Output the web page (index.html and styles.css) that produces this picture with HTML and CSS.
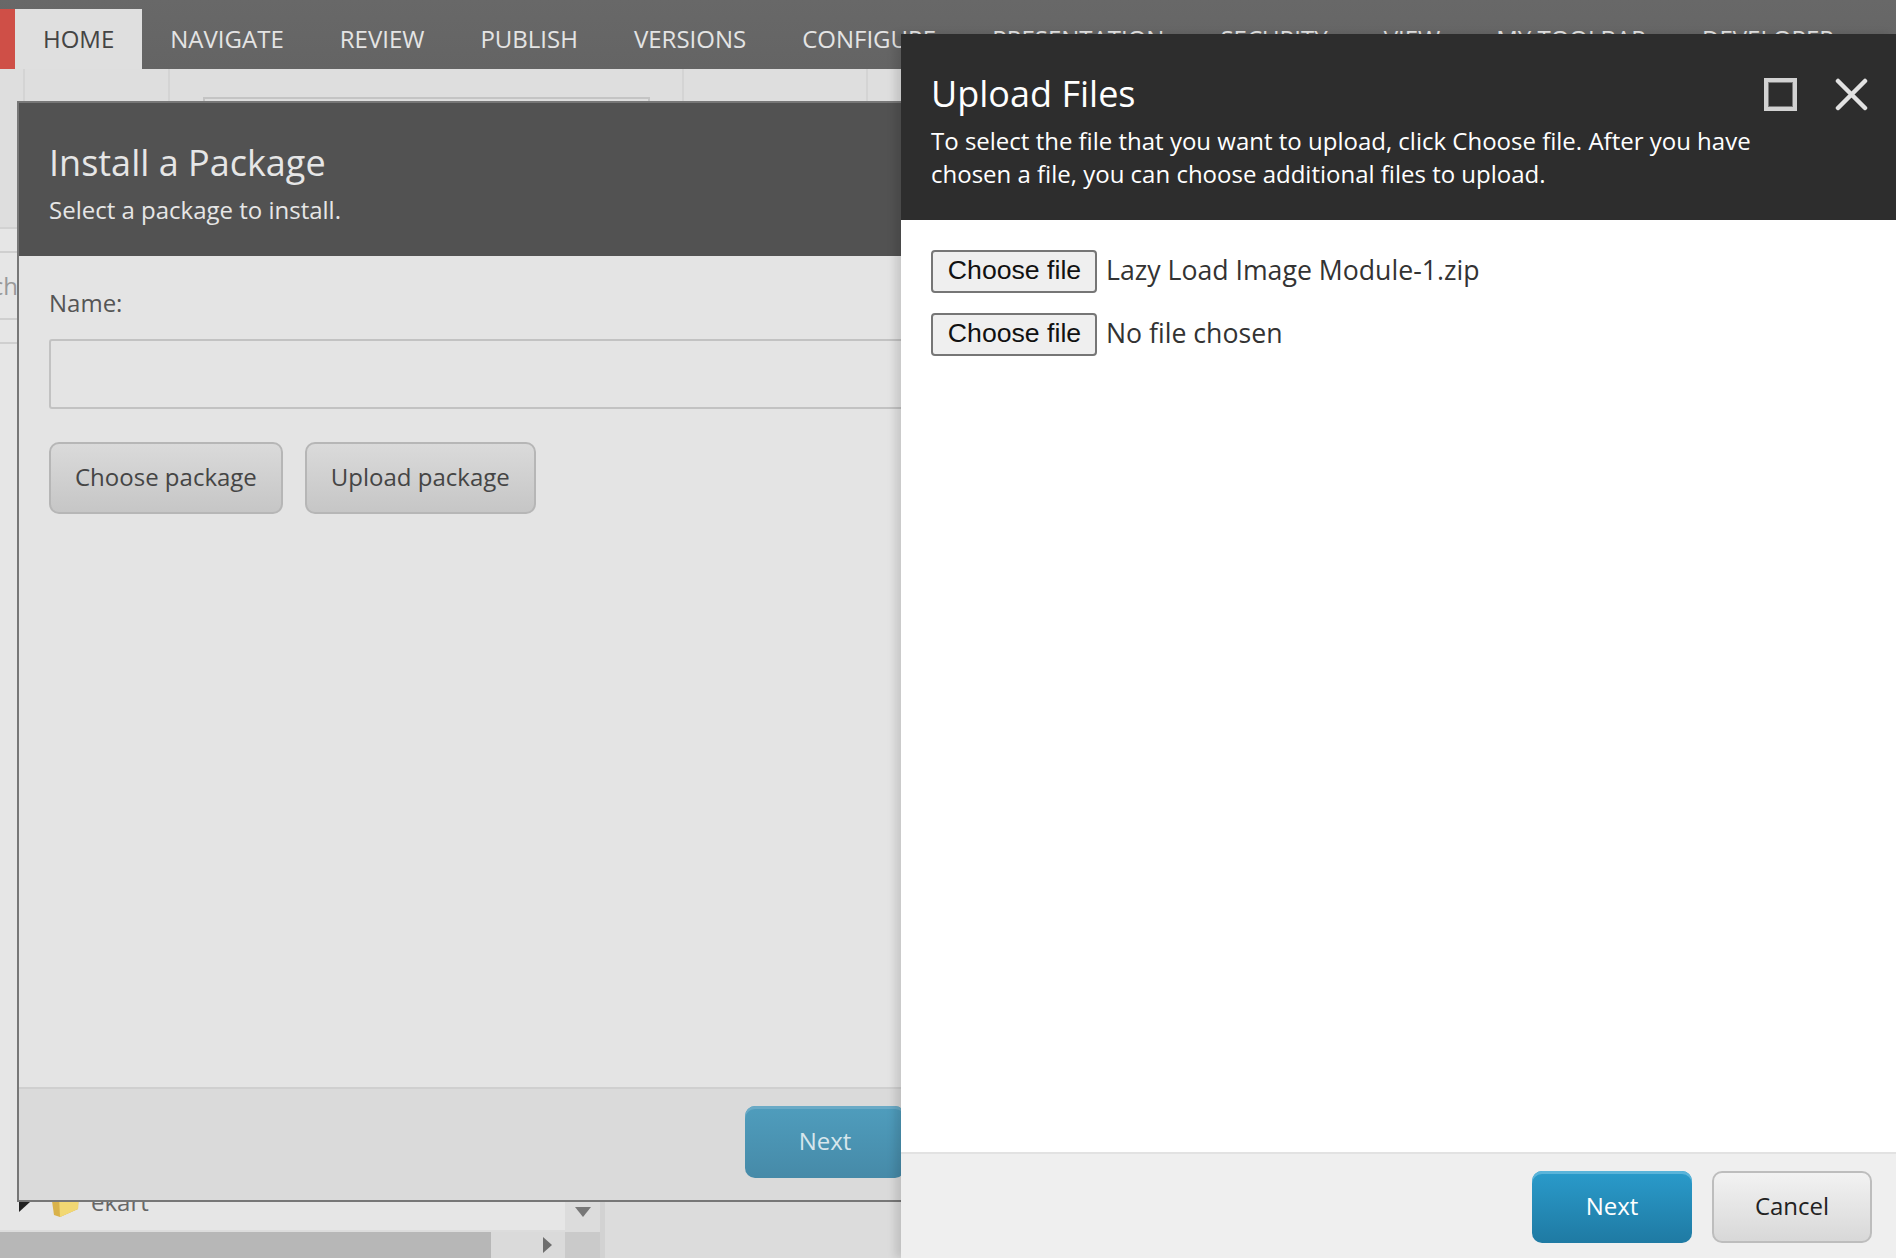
FILE: index.html
```html
<!DOCTYPE html>
<html lang="en">
<head>
    <meta charset="UTF-8">
    <title>Upload Files</title>
    <link rel="stylesheet" href="styles.css">
</head>
<body>
    <div class="app">
        <header class="topbar">
            <div class="logo"></div>
            <nav class="tabs">
                <a class="tab active">Home</a>
                <a class="tab">Navigate</a>
                <a class="tab">Review</a>
                <a class="tab">Publish</a>
                <a class="tab">Versions</a>
                <a class="tab">Configure</a>
                <a class="tab">Presentation</a>
                <a class="tab">Security</a>
                <a class="tab">View</a>
                <a class="tab">My Toolbar</a>
                <a class="tab">Developer</a>
            </nav>
        </header>
        <div class="ribbon">
            <div class="ribbon-group group-a"></div>
            <div class="ribbon-group group-b"></div>
            <div class="ribbon-group group-c"><div class="ribbon-box"></div></div>
            <div class="ribbon-group group-d"></div>
        </div>
        <div class="workspace">
            <aside class="tree-pane">
                <div class="pane-row row-thin"></div>
                <div class="pane-row row-search"><span>Search</span></div>
                <div class="pane-row row-thin"></div>
                <div class="tree">
                    <div class="tree-row">
                        <span class="tree-toggle"></span>
                        <svg class="folder" width="30" height="32" viewBox="0 0 30 32">
                            <path d="M1 8 L10 5 L29 3 L28 23 L10 31 L4 29 Z" fill="#d9b24a"/>
                            <path d="M9 10 L29 3 L28 23 L10 31 Z" fill="#f2d873"/>
                        </svg>
                        <span class="tree-label">ekart</span>
                    </div>
                    <div class="v-scroll"><span class="arrow-down"></span></div>
                </div>
                <div class="h-scroll">
                    <div class="h-thumb"></div>
                    <span class="arrow-right"></span>
                    <div class="scroll-corner"></div>
                </div>
            </aside>
            <div class="splitter"></div>
            <main class="editor"></main>
        </div>
    </div>

    <section class="dialog install">
        <div class="install-head">
            <h2>Install a Package</h2>
            <p>Select a package to install.</p>
        </div>
        <div class="install-body">
            <label class="name-label">Name:</label>
            <input class="name-input" type="text">
            <div class="install-actions">
                <button class="btn btn-gray">Choose package</button>
                <button class="btn btn-gray">Upload package</button>
            </div>
        </div>
        <div class="install-foot">
            <button class="btn btn-blue btn-faded">Next</button>
        </div>
    </section>

    <section class="dialog upload">
        <div class="upload-head">
            <div class="upload-title">
                <h2>Upload Files</h2>
                <div class="window-icons">
                    <svg width="33" height="33" viewBox="0 0 33 33">
                        <rect x="2" y="2" width="29" height="29" fill="none" stroke="#d2d2d2" stroke-width="4"/>
                        <rect x="4.5" y="4.5" width="24" height="24" fill="none" stroke="#7c7c7c" stroke-width="1"/>
                    </svg>
                    <svg width="33" height="33" viewBox="0 0 33 33">
                        <path d="M3 3 L30 30 M30 3 L3 30" fill="none" stroke="#e2e2e2" stroke-width="4.5" stroke-linecap="round"/>
                    </svg>
                </div>
            </div>
            <p>To select the file that you want to upload, click Choose file. After you have chosen a file, you can choose additional files to upload.</p>
        </div>
        <div class="upload-body">
            <div class="file-row">
                <button class="file-btn">Choose file</button>
                <span class="file-name">Lazy Load Image Module-1.zip</span>
            </div>
            <div class="file-row">
                <button class="file-btn">Choose file</button>
                <span class="file-name">No file chosen</span>
            </div>
        </div>
        <div class="upload-foot">
            <button class="btn btn-blue">Next</button>
            <button class="btn btn-light">Cancel</button>
        </div>
    </section>
</body>
</html>
```

FILE: styles.css
```css
*{
    box-sizing: border-box;
}
html, body{
    margin: 0;
    height: 100%;
    overflow: hidden;
}
body{
    font-family: "Open Sans", sans-serif;
    position: relative;
    background-color: #dedede;
}
h2, p{
    margin: 0;
    font-weight: 400;
}

/* page behind the dialogs */
.app{
    height: 1258px;
    display: flex;
    flex-direction: column;
}
.topbar{
    height: 69px;
    padding-top: 9px;
    display: flex;
    background: linear-gradient(#686868, #646464);
}
.logo{
    width: 15px;
    background-color: #cf4f47;
}
.tabs{
    display: flex;
}
.tab{
    padding: 13px 28px 0;
    font-size: 24px;
    line-height: 33px;
    text-transform: uppercase;
    color: #e4e4e4;
    white-space: nowrap;
}
.tab.active{
    background-color: #dfdfdf;
    color: #444;
}
.ribbon{
    height: 160px;
    flex-shrink: 0;
    display: flex;
    border-bottom: 2px solid #d2d2d2;
}
.ribbon-group{
    border-right: 2px solid #d4d4d4;
}
.group-a{ width: 25px; }
.group-b{ width: 145px; }
.group-c{
    width: 514px;
    padding: 28px 0 0 33px;
}
.group-d{ width: 184px; }
.ribbon-box{
    width: 447px;
    height: 40px;
    border: 2px solid #c4c4c4;
}
.workspace{
    flex: 1;
    display: flex;
    min-height: 0;
}
.tree-pane{
    width: 600px;
    display: flex;
    flex-direction: column;
    flex-shrink: 0;
}
.pane-row{
    background-color: #e6e6e6;
    border-bottom: 2px solid #cfcfcf;
}
.row-thin{
    height: 24px;
}
.row-search{
    height: 67px;
    width: 18px;
    overflow: hidden;
    display: flex;
    justify-content: flex-end;
    align-items: center;
    font-size: 24px;
    color: #999;
}
.tree{
    flex: 1;
    display: flex;
    align-items: flex-end;
    background-color: #e6e6e6;
    border-bottom: 2px solid #dcdcdc;
}
.tree-row{
    flex: 1;
    height: 54px;
    padding: 0 0 3px 19px;
    display: flex;
    align-items: center;
    color: #666;
    font-size: 24px;
}
.tree-toggle{
    width: 0;
    height: 0;
    border-top: 10px solid transparent;
    border-bottom: 10px solid transparent;
    border-left: 11px solid #222;
}
.folder{
    margin-left: 20px;
}
.tree-label{
    margin-left: 11px;
}
.v-scroll{
    width: 35px;
    height: 54px;
    padding-bottom: 13px;
    background-color: #dcdcdc;
    display: flex;
    justify-content: center;
    align-items: flex-end;
}
.arrow-down{
    width: 0;
    height: 0;
    border-left: 8px solid transparent;
    border-right: 8px solid transparent;
    border-top: 10px solid #777;
}
.h-scroll{
    height: 26px;
    display: flex;
    align-items: center;
    background-color: #dadada;
}
.h-thumb{
    width: 491px;
    height: 100%;
    background-color: #b7b7b7;
}
.arrow-right{
    margin-left: 52px;
    width: 0;
    height: 0;
    border-top: 8px solid transparent;
    border-bottom: 8px solid transparent;
    border-left: 9px solid #6e6e6e;
}
.scroll-corner{
    margin-left: 13px;
    width: 35px;
    height: 100%;
    background-color: #cacaca;
}
.splitter{
    width: 5px;
    background-color: #d2d2d2;
}
.editor{
    flex: 1;
    background-color: #dcdcdc;
}

/* dialogs */
.dialog{
    position: absolute;
    display: flex;
    flex-direction: column;
}
.install{
    left: 17px;
    top: 101px;
    width: 1000px;
    height: 1101px;
    border: 2px solid #777;
    border-right: 0;
    background-color: #e4e4e4;
}
.install-head{
    height: 153px;
    padding: 36px 30px 0;
    background-color: #525252;
    color: #e6e6e6;
}
.install-head h2{
    font-size: 36px;
    line-height: 48px;
}
.install-head p{
    margin-top: 6px;
    font-size: 24px;
    line-height: 33px;
}
.install-body{
    flex: 1;
    padding: 30px 30px 0;
}
.name-label{
    display: block;
    font-size: 24px;
    line-height: 33px;
    color: #555;
}
.name-input{
    display: block;
    margin-top: 20px;
    width: 100%;
    height: 70px;
    background-color: #e4e4e4;
    border: 2px solid #c2c2c2;
    border-radius: 3px;
}
.install-actions{
    margin-top: 33px;
    display: flex;
    gap: 22px;
}
.install-foot{
    height: 113px;
    padding: 17px 0 0 726px;
    background-color: #dadada;
    border-top: 2px solid #cfcfcf;
}
.btn{
    height: 72px;
    font-family: inherit;
    font-size: 24px;
    border-radius: 10px;
    padding: 0 24px 3px;
}
.btn-gray{
    color: #454545;
    background: linear-gradient(#dadada, #c6c6c6);
    border: 2px solid #b6b6b6;
}
.btn-blue{
    width: 160px;
    color: #fff;
    background: linear-gradient(#2a9bcb, #1f7aa3);
    border: 0;
    box-shadow: inset 0 3px 0 #5ab4da;
}
.btn-faded{
    color: #d7e6ec;
    background: linear-gradient(#4f9dbd, #468aa8);
    box-shadow: inset 0 3px 0 #6aaac6;
}
.btn-light{
    width: 160px;
    color: #222;
    background: linear-gradient(#f2f2f2, #d8d8d8);
    border: 2px solid #bdbdbd;
}

.upload{
    left: 901px;
    top: 34px;
    right: 0;
    bottom: 0;
    background-color: #fff;
    box-shadow: -6px 0 8px rgba(0, 0, 0, 0.12);
}
.upload-head{
    height: 186px;
    padding: 36px 28px 0 30px;
    background-color: #2d2d2d;
    color: #fff;
}
.upload-title{
    display: flex;
    justify-content: space-between;
    align-items: center;
}
.upload-title h2{
    font-size: 36px;
    line-height: 48px;
}
.window-icons{
    display: flex;
    gap: 38px;
}
.upload-head p{
    margin-top: 6px;
    font-size: 24px;
    line-height: 33px;
    max-width: 860px;
}
.upload-body{
    flex: 1;
    padding: 30px 30px 0;
    display: flex;
    flex-direction: column;
    gap: 20px;
}
.file-row{
    display: flex;
    align-items: center;
    gap: 9px;
    font-size: 26.67px;
    color: #333;
}
.file-name{
    padding-bottom: 4px;
}
.file-btn{
    width: 166px;
    height: 43px;
    padding: 0 0 2px 1px;
    font-family: "Liberation Sans", sans-serif;
    font-size: 26.67px;
    color: #111;
    background-color: #efefef;
    border: 2px solid #767676;
    border-radius: 4px;
}
.upload-foot{
    height: 106px;
    padding: 17px 24px 0 0;
    display: flex;
    justify-content: flex-end;
    gap: 20px;
    background-color: #efefef;
    border-top: 2px solid #e2e2e2;
}
```
